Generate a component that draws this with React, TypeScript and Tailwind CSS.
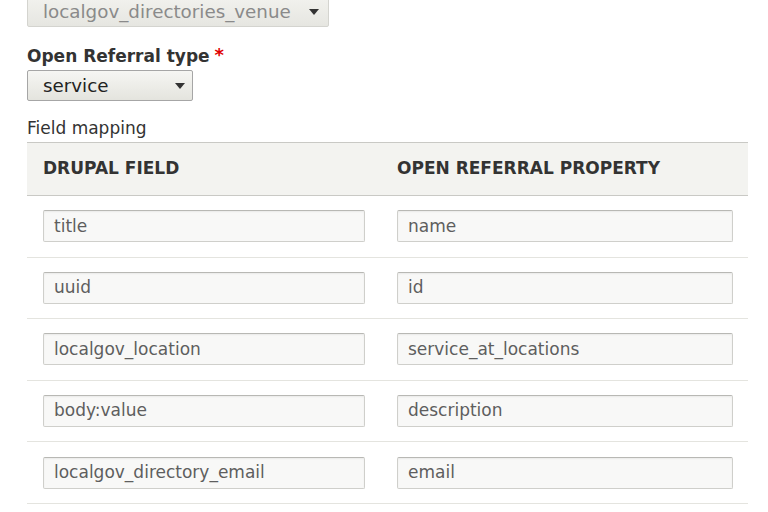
import * as React from "react"

const rows = [
  ["title", "name"],
  ["uuid", "id"],
  ["localgov_location", "service_at_locations"],
  ["body:value", "description"],
  ["localgov_directory_email", "email"],
]

function Arrow() {
  return (
    <svg width="10" height="6" viewBox="0 0 10 6" className="shrink-0">
      <path d="M0 0 L10 0 L5 6 Z" fill="#333333" />
    </svg>
  )
}

function TextInput({ value }: { value: string }) {
  return (
    <div className="flex h-[32px] w-full items-center rounded-[2px] border border-[#cfcfcb] border-t-[#b8b8b4] bg-[#f8f8f7] pl-[10px] text-[17px] text-[#5e5e5e] shadow-[inset_0_1px_2px_rgba(0,0,0,0.06)]">
      {value}
    </div>
  )
}

export default function App() {
  return (
    <main className="min-h-[512px] w-[768px] overflow-hidden bg-white px-[27px] font-['DejaVu_Sans',sans-serif] text-[#333333]">
      {/* disabled bundle select */}
      <div className="-mt-[4px] flex h-[31px] w-[302px] items-center justify-between rounded-[2px] border border-[#d4d4cf] bg-gradient-to-b from-[#f2f2ee] to-[#e6e6e1] pl-[15px] pr-[9px] text-[18.3px] text-[#8a8a8a]">
        <span>localgov_directories_venue</span>
        <Arrow />
      </div>

      <div className="mt-[19px] flex h-[20px] items-center text-[17px] leading-[20px] font-bold text-[#333333]">
        Open Referral type
        <span className="ml-[5px] -mt-[3px] text-[18px] font-bold text-[#e00000]">*</span>
      </div>

      <div className="mt-[4px] flex h-[31px] w-[166px] items-center justify-between rounded-[2px] border border-[#a6a6a6] bg-gradient-to-b from-[#f6f6f3] to-[#e4e4de] pl-[15px] pr-[7px] text-[18.3px] text-[#222222]">
        <span>service</span>
        <Arrow />
      </div>

      <div className="mt-[17px] h-[20px] text-[17px] leading-[20px] text-[#333333]">Field mapping</div>

      <div className="mt-[4px] w-[721px]">
        <div className="grid h-[54px] grid-cols-[354px_1fr] items-center border-y border-[#c9c9c5] bg-[#f3f3f0] text-[17px] font-bold text-[#333333]">
          <div className="pl-[16px]">DRUPAL FIELD</div>
          <div className="pl-[16px]">OPEN REFERRAL PROPERTY</div>
        </div>
        {rows.map(([left, right]) => (
          <div
            key={left}
            className="grid h-[61.6px] grid-cols-[354px_1fr] items-center border-b border-[#e4e4df]"
          >
            <div className="pl-[16px] pr-[16px]">
              <TextInput value={left} />
            </div>
            <div className="pl-[16px] pr-[15px]">
              <TextInput value={right} />
            </div>
          </div>
        ))}
      </div>
    </main>
  )
}
